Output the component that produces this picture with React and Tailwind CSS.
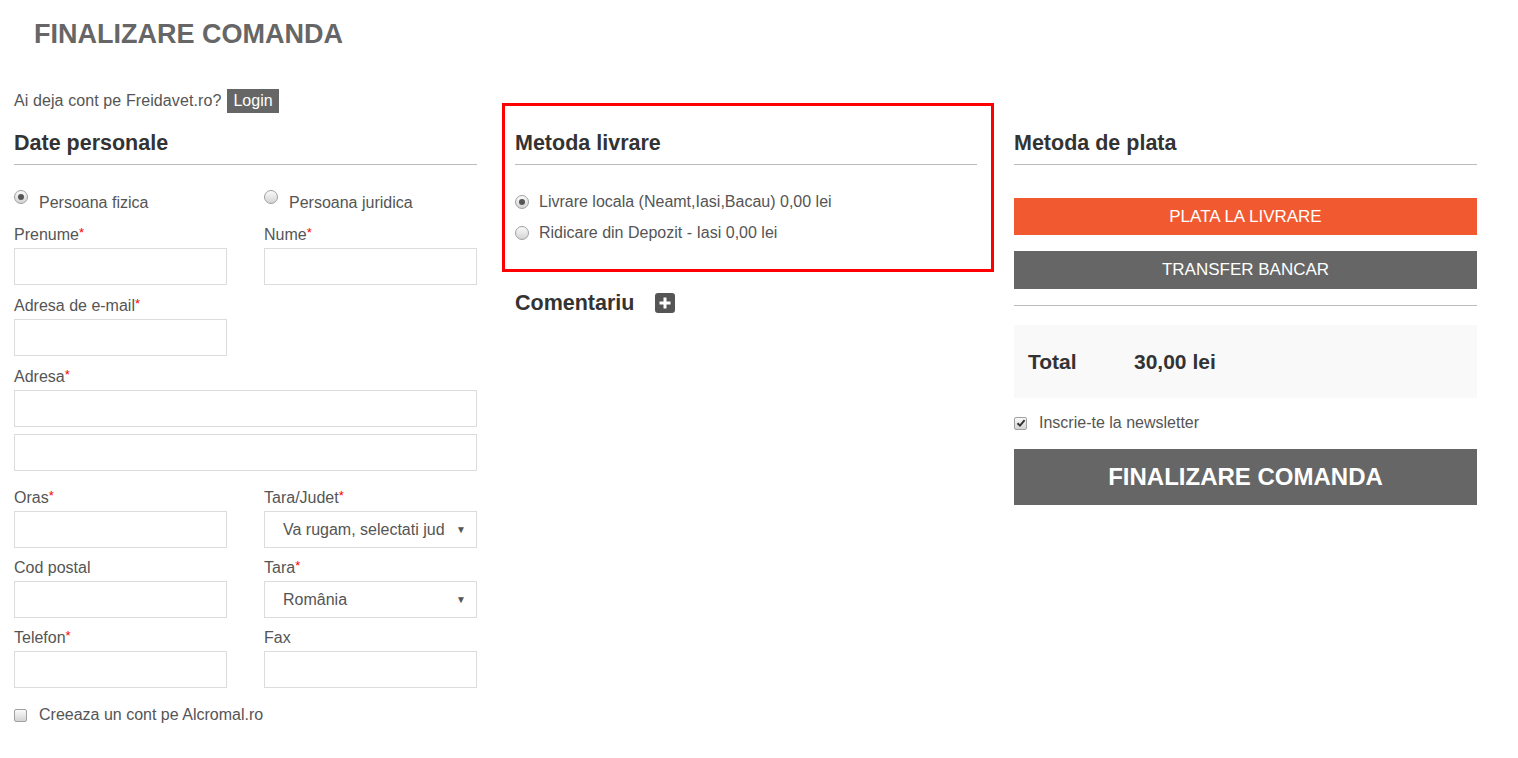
import React from 'react';

const font = { fontFamily: '"Liberation Sans", Arial, sans-serif' };

function Radio({ checked }) {
  return (
    <span className="flex h-[14px] w-[14px] shrink-0 items-center justify-center rounded-full border border-[#a0a0a0] bg-gradient-to-b from-[#fafafa] to-[#d4d4d4]">
      {checked && <span className="h-[6px] w-[6px] rounded-full bg-[#555]" />}
    </span>
  );
}

function Checkbox({ checked }) {
  return (
    <span className="flex h-[13px] w-[13px] shrink-0 items-center justify-center rounded-[2px] border border-[#a0a0a0] bg-gradient-to-b from-[#fafafa] to-[#d4d4d4]">
      {checked && (
        <svg width="10" height="10" viewBox="0 0 10 10">
          <path d="M1.5 5.2 L4 7.6 L8.6 2.2" fill="none" stroke="#333" strokeWidth="2" />
        </svg>
      )}
    </span>
  );
}

function Label({ text, required }) {
  return (
    <div className="h-[20px] text-[16px] leading-[20px] text-[#555] mb-[3px]">
      {text}
      {required && <span className="text-[#f00] text-[13px] align-top leading-[16px]">*</span>}
    </div>
  );
}

function Input() {
  return <div className="h-[37px] border border-[#dcdcdc] bg-white" />;
}

function Select({ value }) {
  return (
    <div className="flex h-[37px] items-center justify-between border border-[#dcdcdc] bg-white pl-[18px] text-[16px] text-[#555]">
      <span className="whitespace-nowrap">{value}</span>
      <span className="w-[28px] shrink-0 pr-[2px] text-center text-[10px] leading-[12px] text-[#555]">▼</span>
    </div>
  );
}

function Heading({ children }) {
  return (
    <div className="border-b border-[#bbb] pb-[8px] text-[21.5px] font-bold leading-[26px] text-[#333]">
      {children}
    </div>
  );
}

function Field({ label, required, children, className = '' }) {
  return (
    <div className={className}>
      <Label text={label} required={required} />
      {children}
    </div>
  );
}

export default function App() {
  return (
    <div className="min-h-screen bg-white" style={font}>
      <div className="pl-[34px] pt-[18px] h-[86px]">
        <h1 className="text-[27px] font-bold leading-[32px] text-[#666]">FINALIZARE COMANDA</h1>
      </div>

      <div className="grid grid-cols-[500px_500px_500px] items-start">
        {/* Date personale */}
        <div className="pl-[14px] w-[477px]">
          <div className="mt-[3px] flex items-center h-[24px] text-[16px] text-[#555]">
            <span className="tracking-[0.1px]">Ai deja cont pe Freidavet.ro?</span>
            <span className="ml-[6px] h-[24px] bg-[#666] px-[6px] leading-[24px] text-white">Login</span>
          </div>
          <div className="mt-[17px]">
            <Heading>Date personale</Heading>
          </div>

          <div className="mt-[28px] grid grid-cols-2 gap-x-[37px]">
            <div className="flex items-start gap-[11px]">
              <span className="-mt-[3px]"><Radio checked /></span>
              <span className="text-[16px] leading-[20px] text-[#555]">Persoana fizica</span>
            </div>
            <div className="flex items-start gap-[11px]">
              <span className="-mt-[3px]"><Radio /></span>
              <span className="text-[16px] leading-[20px] text-[#555]">Persoana juridica</span>
            </div>
          </div>

          <div className="mt-[12px] grid grid-cols-2 gap-x-[37px]">
            <Field label="Prenume" required><Input /></Field>
            <Field label="Nume" required><Input /></Field>
          </div>

          <div className="mt-[11px] grid grid-cols-2 gap-x-[37px]">
            <Field label="Adresa de e-mail" required><Input /></Field>
          </div>

          <Field label="Adresa" required className="mt-[11px]">
            <Input />
            <div className="mt-[7px]"><Input /></div>
          </Field>

          <div className="mt-[17px] grid grid-cols-2 gap-x-[37px]">
            <Field label="Oras" required><Input /></Field>
            <Field label="Tara/Judet" required><Select value="Va rugam, selectati jud" /></Field>
          </div>

          <div className="mt-[10px] grid grid-cols-2 gap-x-[37px]">
            <Field label="Cod postal"><Input /></Field>
            <Field label="Tara" required><Select value="România" /></Field>
          </div>

          <div className="mt-[10px] grid grid-cols-2 gap-x-[37px]">
            <Field label="Telefon" required><Input /></Field>
            <Field label="Fax"><Input /></Field>
          </div>

          <div className="mt-[17px] flex items-center gap-[12px]">
            <Checkbox />
            <span className="text-[16px] leading-[20px] text-[#555]">Creeaza un cont pe Alcromal.ro</span>
          </div>
        </div>

        {/* Metoda livrare */}
        <div className="pl-[2px]">
          <div className="mt-[17px] w-[492px] border-[3px] border-[#f00] pl-[10px] pr-[14px] pt-[24px] pb-[26px]">
            <Heading>Metoda livrare</Heading>
            <div className="mt-[27px] flex items-center gap-[10px] h-[20px]">
              <Radio checked />
              <span className="text-[16px] leading-[20px] text-[#555]">Livrare locala (Neamt,Iasi,Bacau) 0,00 lei</span>
            </div>
            <div className="mt-[11px] flex items-center gap-[10px] h-[20px]">
              <Radio />
              <span className="text-[16px] leading-[20px] text-[#555]">Ridicare din Depozit - Iasi 0,00 lei</span>
            </div>
          </div>
          <div className="mt-[18px] pl-[13px] flex items-center gap-[21px]">
            <span className="text-[21.5px] font-bold leading-[26px] text-[#333]">Comentariu</span>
            <span className="flex h-[20px] w-[20px] items-center justify-center rounded-[3px] bg-[#555]">
              <svg width="12" height="12" viewBox="0 0 12 12">
                <rect x="4.5" y="0.5" width="3" height="11" fill="#fff" />
                <rect x="0.5" y="4.5" width="11" height="3" fill="#fff" />
              </svg>
            </span>
          </div>
        </div>

        {/* Metoda de plata */}
        <div className="pl-[14px] w-[477px]">
          <div className="mt-[44px]">
            <Heading>Metoda de plata</Heading>
          </div>
          <div className="mt-[33px] flex h-[37px] items-center justify-center bg-[#f15a30] text-[17px] text-white">
            PLATA LA LIVRARE
          </div>
          <div className="mt-[16px] flex h-[38px] items-center justify-center bg-[#666] text-[17px] text-white">
            TRANSFER BANCAR
          </div>
          <div className="mt-[16px] border-t border-[#bbb]" />
          <div className="mt-[19px] flex h-[73px] items-center bg-[#f9f9f9] px-[14px] text-[21px] font-bold text-[#333]">
            <span className="w-[106px]">Total</span>
            <span>30,00 lei</span>
          </div>
          <div className="mt-[15px] flex items-center gap-[12px]">
            <Checkbox checked />
            <span className="text-[16px] leading-[20px] text-[#555]">Inscrie-te la newsletter</span>
          </div>
          <div className="mt-[16px] flex h-[56px] items-center justify-center bg-[#666] text-[24px] font-bold text-white">
            FINALIZARE COMANDA
          </div>
        </div>
      </div>
    </div>
  );
}
